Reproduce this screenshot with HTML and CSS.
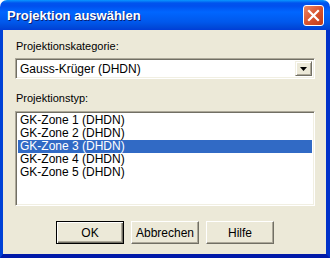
FILE: index.html
```html
<!DOCTYPE html>
<html lang="de">
<head>
    <meta charset="UTF-8">
    <title>Projektion auswählen</title>
    <link rel="stylesheet" href="styles.css">
</head>
<body>
    <div class="window">
        <div class="titlebar">
            <span class="title">Projektion auswählen</span>
            <div class="close">
                <svg width="13" height="13" viewBox="0 0 13 13">
                    <path d="M2 2 L11 11 M11 2 L2 11" stroke="#fff" stroke-width="2.2" stroke-linecap="square"/>
                </svg>
            </div>
        </div>
        <div class="frame">
            <div class="label">Projektionskategorie:</div>
            <div class="combo">
                <span class="combo-text">Gauss-Krüger (DHDN)</span>
                <div class="combo-btn">
                    <svg width="7" height="4" viewBox="0 0 7 4"><path d="M0 0 H7 L3.5 4 Z" fill="#000"/></svg>
                </div>
            </div>
            <div class="label second">Projektionstyp:</div>
            <div class="listbox">
                <div class="item">GK-Zone 1 (DHDN)</div>
                <div class="item">GK-Zone 2 (DHDN)</div>
                <div class="item selected">GK-Zone 3 (DHDN)</div>
                <div class="item">GK-Zone 4 (DHDN)</div>
                <div class="item">GK-Zone 5 (DHDN)</div>
            </div>
            <div class="buttons">
                <div class="button default"><span>OK</span></div>
                <div class="button"><span>Abbrechen</span></div>
                <div class="button"><span>Hilfe</span></div>
            </div>
        </div>
    </div>
</body>
</html>
```

FILE: styles.css
```css
body {
    margin: 0;
    background: #ffffff;
    font-family: "Liberation Sans", Arial, sans-serif;
    font-size: 11px;
    color: #000;
}

.window {
    width: 330px;
    height: 258px;
    display: flex;
    flex-direction: column;
}

.titlebar {
    height: 30px;
    flex: none;
    display: flex;
    align-items: center;
    justify-content: space-between;
    padding: 0 6px 0 7px;
    box-sizing: border-box;
    border-radius: 7px 7px 0 0;
    background: linear-gradient(to bottom, #0997ff 0px, #0053ee 3px, #0050ee 6px, #0066ff 12px, #0058ec 22px, #004ada 27px, #003dd7 30px);
}

.title {
    color: #fff;
    font-weight: bold;
    font-size: 13px;
    text-shadow: 1px 1px 0 #0a1e72;
}

.close {
    width: 19px;
    height: 19px;
    border: 1px solid #fff;
    border-radius: 3px;
    background: linear-gradient(to bottom right, #e98868, #d9542f 50%, #c13b17);
    display: flex;
    align-items: center;
    justify-content: center;
    margin-top: 1px;
}

.frame {
    flex: 1;
    background: #ece9d8;
    border-left: 3px solid #0041d6;
    border-right: 4px solid #0031c9;
    border-bottom: 4px solid #0019a8;
    padding: 10px 11px 0 12px;
    display: flex;
    flex-direction: column;
}

.label {
    margin-left: 1px;
    line-height: 13px;
    height: 13px;
}

.label.second {
    margin-top: 13px;
}

.combo {
    margin-top: 5px;
    height: 21px;
    box-sizing: border-box;
    background: #fff;
    border-top: 1px solid #aca899;
    border-left: 1px solid #aca899;
    border-right: 1px solid #fff;
    border-bottom: 1px solid #fff;
    box-shadow: inset 1px 1px 0 #716f64, inset -1px -1px 0 #f1efe2;
    display: flex;
    align-items: center;
    justify-content: space-between;
    padding: 2px 2px 2px 4px;
}

.combo-text {
    font-size: 12px;
}

.combo-btn {
    width: 17px;
    height: 15px;
    box-sizing: border-box;
    background: #ece9d8;
    border-top: 1px solid #f1efe2;
    border-left: 1px solid #f1efe2;
    border-right: 1px solid #716f64;
    border-bottom: 1px solid #716f64;
    box-shadow: inset 1px 1px 0 #fff, inset -1px -1px 0 #aca899;
    display: flex;
    align-items: center;
    justify-content: center;
}

.listbox {
    margin-top: 6px;
    height: 95px;
    box-sizing: border-box;
    background: #fff;
    border-top: 1px solid #aca899;
    border-left: 1px solid #aca899;
    border-right: 1px solid #fff;
    border-bottom: 1px solid #fff;
    box-shadow: inset 1px 1px 0 #716f64, inset -1px -1px 0 #f1efe2;
    padding: 2px 2px 0 2px;
}

.item {
    height: 13px;
    line-height: 13px;
    padding-left: 2px;
    font-size: 12px;
}

.item.selected {
    background: #316ac5;
    color: #fff;
}

.buttons {
    margin-top: 15px;
    display: flex;
    gap: 7px;
    padding-left: 41px;
}

.button {
    width: 68px;
    height: 23px;
    box-sizing: border-box;
    background: #ece9d8;
    border-top: 1px solid #fff;
    border-left: 1px solid #fff;
    border-right: 1px solid #716f64;
    border-bottom: 1px solid #716f64;
    box-shadow: inset -1px -1px 0 #aca899;
    display: flex;
    align-items: center;
    justify-content: center;
    font-size: 12px;
}

.button.default {
    border: 1px solid #000;
    box-shadow: inset 1px 1px 0 #fff, inset -1px -1px 0 #716f64, inset -2px -2px 0 #aca899;
}
```
